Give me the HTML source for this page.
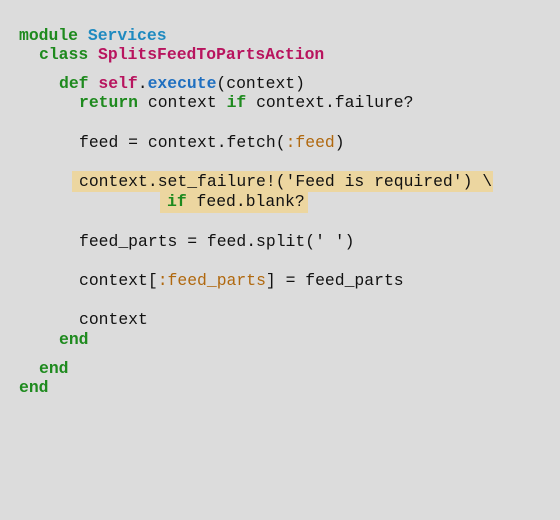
<html><head><style>
body{margin:0;width:560px;height:520px;background:#dcdcdc;font-family:"Liberation Mono",monospace;font-size:16.4px;color:#111;position:relative;overflow:hidden}
.l{position:absolute;white-space:pre;line-height:20px;margin-top:1px}
.k{color:#1e8a1e;font-weight:bold}.c{color:#1f8ac0;font-weight:bold}.m{color:#b8145e;font-weight:bold}.f{color:#1f6fc0;font-weight:bold}.s{color:#b0680e}
.h{position:absolute;background:#ecd6a0}
</style></head><body>
<div class="h" style="left:72px;top:171px;width:421px;height:21px"></div>
<div class="h" style="left:160px;top:191px;width:148px;height:22px"></div>
<div class="l" style="left:19px;top:25px"><span class="k">module</span> <span class="c">Services</span></div>
<div class="l" style="left:39px;top:44px"><span class="k">class</span> <span class="m">SplitsFeedToPartsAction</span></div>
<div class="l" style="left:59px;top:73px"><span class="k">def</span> <span class="m">self</span>.<span class="f">execute</span>(context)</div>
<div class="l" style="left:79px;top:92px"><span class="k">return</span> context <span class="k">if</span> context.failure?</div>
<div class="l" style="left:79px;top:132px">feed = context.fetch(<span class="s">:feed</span>)</div>
<div class="l" style="left:79px;top:171px">context.set_failure!('Feed is required') \</div>
<div class="l" style="left:167px;top:191px"><span class="k">if</span> feed.blank?</div>
<div class="l" style="left:79px;top:231px">feed_parts = feed.split(' ')</div>
<div class="l" style="left:79px;top:270px">context[<span class="s">:feed_parts</span>] = feed_parts</div>
<div class="l" style="left:79px;top:309px">context</div>
<div class="l" style="left:59px;top:329px"><span class="k">end</span></div>
<div class="l" style="left:39px;top:358px"><span class="k">end</span></div>
<div class="l" style="left:19px;top:377px"><span class="k">end</span></div>
</body></html>
